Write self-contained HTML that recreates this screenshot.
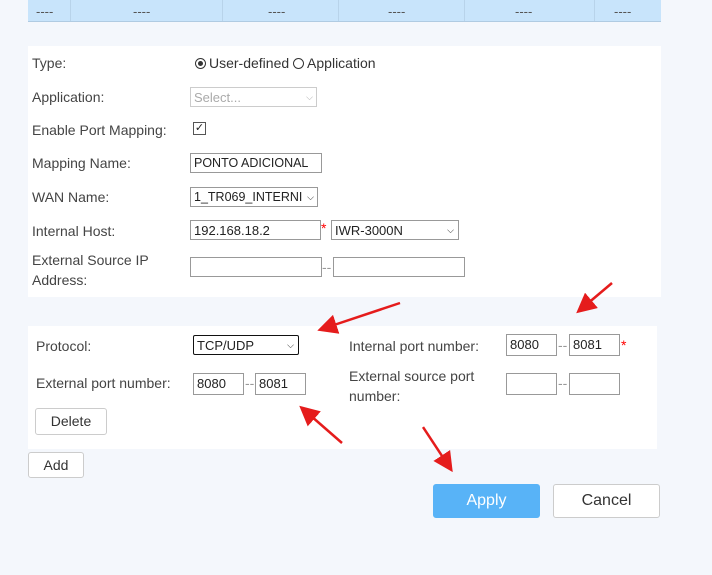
<!DOCTYPE html>
<html><head><style>
body{margin:0;width:712px;height:575px;background:#f4f7fc;font-family:"Liberation Sans",sans-serif;font-size:14px;color:#444;position:relative;overflow:hidden}
.a{position:absolute;white-space:nowrap}
.in{position:absolute;height:20px;border:1px solid #999;background:#fff;box-sizing:border-box;font-size:13px;color:#222;padding:1px 3px;line-height:17px;white-space:nowrap;overflow:hidden}
.btn{position:absolute;background:#fff;border:1px solid #ccc;border-radius:3px;box-sizing:border-box;text-align:center;color:#333}
.dash{position:absolute;top:4px;color:#555;font-size:13px}
.sep{position:absolute;top:0;width:1px;height:21px;background:#b8d3ea}
.rd{display:inline-block;width:9px;height:9px;border:1px solid #333;border-radius:50%;vertical-align:-1px;position:relative;margin-right:3px}
</style></head><body>
<div class="a" style="left:28px;top:0;width:633px;height:21px;background:#c8e4fb;border-bottom:1px solid #b0cbe2"></div>
<div class="sep" style="left:70px"></div><div class="sep" style="left:222px"></div><div class="sep" style="left:338px"></div><div class="sep" style="left:464px"></div><div class="sep" style="left:594px"></div>
<div class="dash" style="left:36px">----</div><div class="dash" style="left:133px">----</div><div class="dash" style="left:268px">----</div><div class="dash" style="left:388px">----</div><div class="dash" style="left:515px">----</div><div class="dash" style="left:614px">----</div>

<div class="a" style="left:28px;top:46px;width:633px;height:251px;background:#fff"></div>
<div class="a" style="left:32px;top:55px">Type:</div>
<div class="a" style="left:195px;top:55px;color:#333"><span class="rd"><span style="position:absolute;left:2px;top:2px;width:5px;height:5px;border-radius:50%;background:#333"></span></span>User-defined <span class="rd"></span>Application</div>
<div class="a" style="left:32px;top:89px">Application:</div>
<div class="in" style="left:190px;top:87px;width:127px;color:#aaa;border-color:#ccc">Select...<span style="position:absolute;right:3px;font-size:9px">⌵</span></div>
<div class="a" style="left:32px;top:122px">Enable Port Mapping:</div>
<div class="a" style="left:193px;top:122px;width:11px;height:11px;border:1px solid #555;font-size:11px;line-height:11px;text-align:center;color:#222">✓</div>
<div class="a" style="left:32px;top:155px">Mapping Name:</div>
<div class="in" style="left:190px;top:153px;width:132px;font-size:12.5px">PONTO ADICIONAL</div>
<div class="a" style="left:32px;top:189px">WAN Name:</div>
<div class="in" style="left:190px;top:187px;width:128px;font-size:12.5px">1_TR069_INTERNI<span style="position:absolute;right:0;padding:0 3px;font-size:9px;background:#fff">⌵</span></div>
<div class="a" style="left:32px;top:223px">Internal Host:</div>
<div class="in" style="left:190px;top:220px;width:131px">192.168.18.2</div>
<div class="a" style="left:321px;top:220px;color:red">*</div>
<div class="in" style="left:331px;top:220px;width:128px">IWR-3000N<span style="position:absolute;right:4px;font-size:9px">⌵</span></div>
<div class="a" style="left:32px;top:250px;line-height:20px">External Source IP<br>Address:</div>
<div class="in" style="left:190px;top:257px;width:132px"></div>
<div class="a" style="left:322px;top:259px;color:#999">--</div>
<div class="in" style="left:333px;top:257px;width:132px"></div>

<div class="a" style="left:28px;top:326px;width:629px;height:123px;background:#fff"></div>
<div class="a" style="left:36px;top:338px">Protocol:</div>
<div class="in" style="left:193px;top:335px;width:106px;border:1px solid #111;border-radius:2px">TCP/UDP<span style="position:absolute;right:4px;font-size:9px">⌵</span></div>
<div class="a" style="left:36px;top:375px">External port number:</div>
<div class="in" style="left:193px;top:373px;width:51px;height:22px">8080</div>
<div class="a" style="left:245px;top:375px;color:#999">--</div>
<div class="in" style="left:255px;top:373px;width:51px;height:22px">8081</div>
<div class="a" style="left:349px;top:338px">Internal port number:</div>
<div class="in" style="left:506px;top:334px;width:51px;height:22px">8080</div>
<div class="a" style="left:558px;top:337px;color:#999">--</div>
<div class="in" style="left:569px;top:334px;width:51px;height:22px">8081</div>
<div class="a" style="left:621px;top:337px;color:red">*</div>
<div class="a" style="left:349px;top:366px;line-height:20px">External source port<br>number:</div>
<div class="in" style="left:506px;top:373px;width:51px;height:22px"></div>
<div class="a" style="left:558px;top:375px;color:#999">--</div>
<div class="in" style="left:569px;top:373px;width:51px;height:22px"></div>
<div class="btn" style="left:35px;top:408px;width:72px;height:27px;line-height:25px">Delete</div>
<div class="btn" style="left:28px;top:452px;width:56px;height:26px;line-height:24px">Add</div>
<div class="btn" style="left:433px;top:484px;width:107px;height:34px;line-height:32px;background:#58b3f7;border-color:#58b3f7;color:#fff;font-size:16px">Apply</div>
<div class="btn" style="left:553px;top:484px;width:107px;height:34px;line-height:32px;font-size:16px">Cancel</div>

<svg class="a" style="left:0;top:0" width="712" height="575">
<defs><marker id="h" markerWidth="8" markerHeight="8" refX="6" refY="4" orient="auto"><path d="M0,0 L8,4 L0,8 Z" fill="#e51c1c"/></marker></defs>
<g stroke="#e51c1c" stroke-width="2.5" marker-end="url(#h)">
<line x1="400" y1="303" x2="322" y2="329"/>
<line x1="612" y1="283" x2="580" y2="310"/>
<line x1="342" y1="443" x2="303" y2="409"/>
<line x1="423" y1="427" x2="450" y2="468"/>
</g></svg>
</body></html>
